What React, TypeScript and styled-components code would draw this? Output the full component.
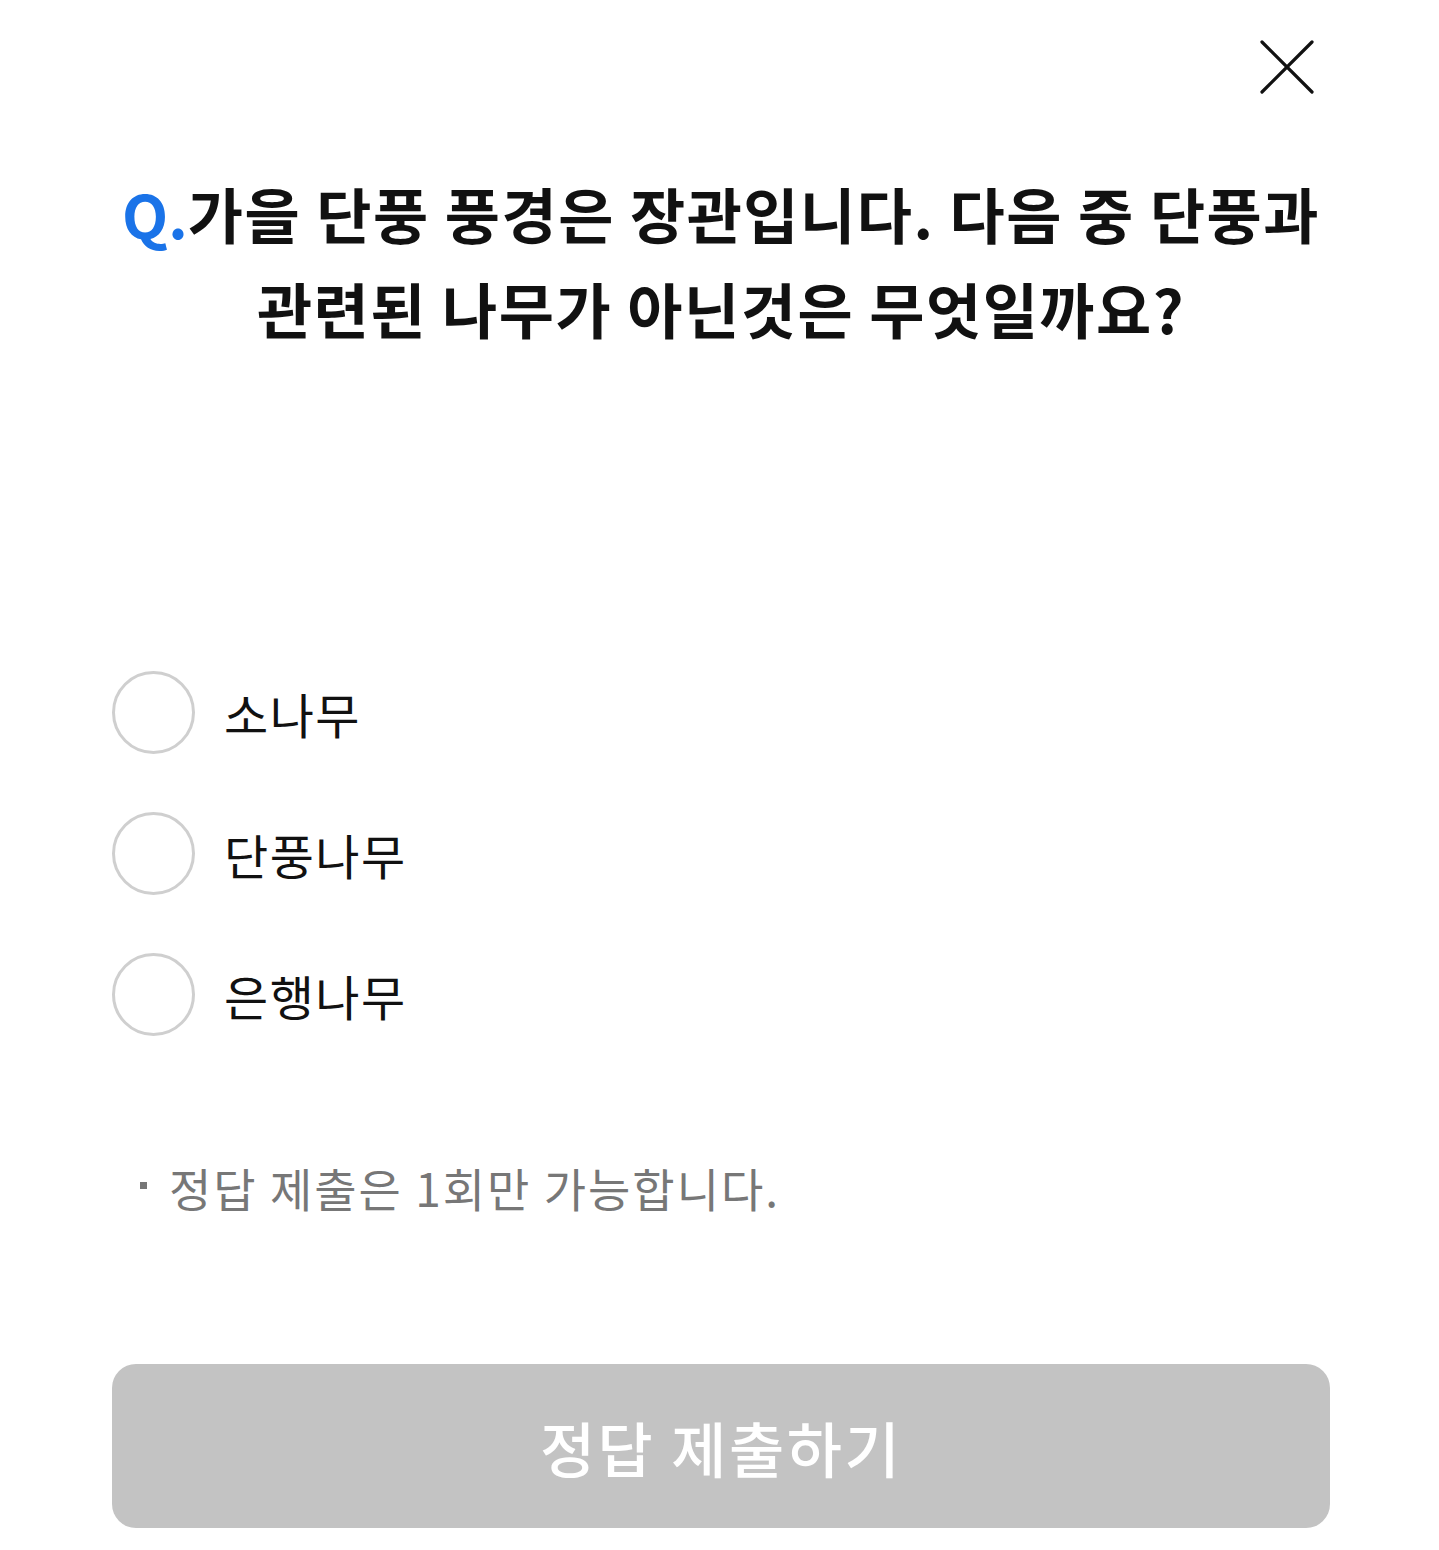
import React, { useState } from 'react';
import styled, { createGlobalStyle } from 'styled-components';

const GlobalStyle = createGlobalStyle`
  html, body {
    margin: 0;
    padding: 0;
    background: #ffffff;
  }
  body {
    font-family: 'Noto Sans CJK KR', 'Noto Sans', sans-serif;
  }
`;

const QuizWrapper = styled.div`
  box-sizing: border-box;
  width: 1439px;
  min-height: 1550px;
  padding: 0 109px 0 112px;
  display: flex;
  flex-direction: column;
  background: #ffffff;
`;

const Header = styled.div`
  display: flex;
  justify-content: flex-end;
  padding-top: 39px;
`;

const CloseButton = styled.button`
  width: 56px;
  height: 56px;
  margin-right: 15px;
  padding: 0;
  border: none;
  background: transparent;
  cursor: pointer;
  display: flex;
  align-items: center;
  justify-content: center;
`;

const Title = styled.h2`
  margin: 70px 0 0;
  font-size: 60px;
  line-height: 95px;
  font-weight: 700;
  color: #111111;
  text-align: center;
  letter-spacing: 1.5px;
`;

const QMark = styled.span`
  color: #1a73e8;
  letter-spacing: 0;
`;

const OptionList = styled.ul`
  list-style: none;
  margin: 316px 0 0;
  padding: 0;
  display: flex;
  flex-direction: column;
  gap: 58px;
`;

const OptionRow = styled.li`
  display: flex;
  align-items: center;
  gap: 29px;
  height: 83px;
  cursor: pointer;
`;

const Radio = styled.span<{ $checked: boolean }>`
  box-sizing: border-box;
  width: 83px;
  height: 83px;
  border-radius: 50%;
  border: 3px solid ${(p) => (p.$checked ? '#1a73e8' : '#cfcfcf')};
  background: #ffffff;
  display: flex;
  align-items: center;
  justify-content: center;

  &::after {
    content: '';
    display: ${(p) => (p.$checked ? 'block' : 'none')};
    width: 41px;
    height: 41px;
    border-radius: 50%;
    background: #1a73e8;
  }
`;

const OptionLabel = styled.span`
  font-size: 48px;
  line-height: 60px;
  letter-spacing: 1.5px;
  color: #111111;
`;

const Notice = styled.p`
  margin: 121px 0 0;
  padding-left: 28px;
  font-size: 46px;
  line-height: 60px;
  letter-spacing: 2px;
  color: #777777;
  display: flex;
  align-items: center;
  gap: 22px;
`;

const Bullet = styled.span`
  width: 7px;
  height: 7px;
  margin-top: -4px;
  background: #777777;
`;

const SubmitButton = styled.button<{ $active: boolean }>`
  margin-top: 147px;
  width: 100%;
  height: 164px;
  border: none;
  border-radius: 24px;
  background: ${(p) => (p.$active ? '#1a73e8' : '#c3c3c3')};
  color: #ffffff;
  font-family: 'Noto Sans CJK KR', 'Noto Sans', sans-serif;
  font-size: 60px;
  font-weight: 500;
  letter-spacing: 2.5px;
  cursor: ${(p) => (p.$active ? 'pointer' : 'default')};
`;

const options = ['소나무', '단풍나무', '은행나무'];

const App = () => {
  const [selected, setSelected] = useState<number | null>(null);

  return (
    <QuizWrapper>
      <GlobalStyle />
      <Header>
        <CloseButton aria-label="닫기">
          <svg width="56" height="56" viewBox="0 0 56 56" fill="none">
            <path d="M3 3L53 53M53 3L3 53" stroke="#111" strokeWidth="3.2" strokeLinecap="round" />
          </svg>
        </CloseButton>
      </Header>
      <Title>
        <QMark>Q.</QMark>가을 단풍 풍경은 장관입니다. 다음 중 단풍과
        <br />
        관련된 나무가 아닌것은 무엇일까요?
      </Title>
      <OptionList>
        {options.map((label, i) => (
          <OptionRow key={label} onClick={() => setSelected(i)}>
            <Radio $checked={selected === i} />
            <OptionLabel>{label}</OptionLabel>
          </OptionRow>
        ))}
      </OptionList>
      <Notice>
        <Bullet />
        <span>정답 제출은 1회만 가능합니다.</span>
      </Notice>
      <SubmitButton $active={selected !== null} disabled={selected === null}>
        정답 제출하기
      </SubmitButton>
    </QuizWrapper>
  );
};

export default App;
